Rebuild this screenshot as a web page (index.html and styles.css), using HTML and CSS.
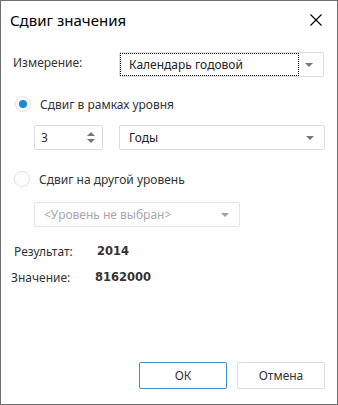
FILE: index.html
```html
<!DOCTYPE html>
<html>
<head>
	<title>Сдвиг значения</title>
	<link rel="stylesheet" href="styles.css">
</head>
<body>
	<div class="dialog">
		<div class="titlebar">
			<span class="title">Сдвиг значения</span>
			<svg class="close" width="12" height="12" viewBox="0 0 12 12"><path d="M0.5 0.5L11.5 11.5M11.5 0.5L0.5 11.5" stroke="#000" stroke-width="1.1"/></svg>
		</div>
		<div class="content">
			<div class="row dimrow">
				<span class="lbl">Измерение:</span>
				<div class="combo dimcombo">
					<span class="focus">Календарь годовой</span>
					<span class="arrow"></span>
				</div>
			</div>
			<div class="radio-row first">
				<span class="radio checked"></span>
				<span>Сдвиг в рамках уровня</span>
			</div>
			<div class="row subrow">
				<div class="spin">
					<span>3</span>
					<span class="spinbtns"><span class="up"></span><span class="down"></span></span>
				</div>
				<div class="combo levcombo">
					<span class="val">Годы</span>
					<span class="arrow"></span>
				</div>
			</div>
			<div class="radio-row second">
				<span class="radio"></span>
				<span>Сдвиг на другой уровень</span>
			</div>
			<div class="row subrow2">
				<div class="combo disabled">
					<span class="val">&lt;Уровень не выбран&gt;</span>
					<span class="arrow"></span>
				</div>
			</div>
			<div class="result r1">
				<span class="rlbl">Результат:</span>
				<b class="rval">2014</b>
			</div>
			<div class="result r2">
				<span class="rlbl2">Значение:</span>
				<b class="rval">8162000</b>
			</div>
		</div>
		<div class="footer">
			<button class="btn ok">ОК</button>
			<button class="btn">Отмена</button>
		</div>
	</div>
</body>
</html>
```
FILE: styles.css
```css
html, body {
	margin: 0;
	padding: 0;
	background: #fff;
}
body {
	font-family: "Noto Sans", sans-serif;
	font-size: 12px;
	color: #333;
}
.dialog {
	box-sizing: border-box;
	width: 338px;
	height: 405px;
	border: 1px solid #6f6f6f;
	display: flex;
	flex-direction: column;
}
.titlebar {
	height: 38px;
	display: flex;
	align-items: center;
	justify-content: space-between;
	padding: 0 15px 0 9px;
}
.title {
	font-size: 15px;
	color: #000;
	margin-top: -1px;
}
.close {
	margin-top: -1px;
}
.content {
	flex: 1;
	padding: 0 12px 0 12px;
}
.row {
	display: flex;
	align-items: center;
}
.dimrow {
	margin-top: 13px;
	height: 25px;
}
.lbl {
	width: 106px;
	color: #333;
	margin-top: -4px;
}
.combo {
	box-sizing: border-box;
	height: 25px;
	border: 1px solid #dcdcdc;
	border-radius: 2px;
	display: flex;
	align-items: center;
	position: relative;
	background: #fff;
}
.dimcombo {
	width: 205px;
}
.focus {
	box-sizing: border-box;
	border: 1px dotted #000;
	height: 23px;
	width: 179px;
	line-height: 21px;
	padding-left: 8px;
	color: #222;
}
.arrow {
	position: absolute;
	right: 10px;
	top: 10px;
	width: 0;
	height: 0;
	border-left: 4px solid transparent;
	border-right: 4px solid transparent;
	border-top: 4px solid #777;
}
.radio-row {
	display: flex;
	align-items: center;
	height: 16px;
}
.radio-row.first {
	margin-top: 19px;
	padding-left: 2px;
}
.radio-row.second {
	margin-top: 21px;
	padding-left: 1px;
}
.radio {
	box-sizing: border-box;
	width: 16px;
	height: 16px;
	border-radius: 50%;
	border: 1px solid #e2e2e2;
	margin-right: 9px;
	display: flex;
	align-items: center;
	justify-content: center;
}
.radio.checked::after {
	content: "";
	width: 8px;
	height: 8px;
	border-radius: 50%;
	background: #1b88d8;
}
.subrow {
	margin-top: 13px;
	padding-left: 21px;
}
.spin {
	box-sizing: border-box;
	width: 69px;
	height: 25px;
	border: 1px solid #dcdcdc;
	border-radius: 2px;
	display: flex;
	align-items: center;
	justify-content: space-between;
	padding: 0 7px 0 6px;
	margin-right: 16px;
}
.spinbtns {
	display: flex;
	flex-direction: column;
	gap: 3px;
}
.up, .down {
	width: 0;
	height: 0;
	border-left: 4px solid transparent;
	border-right: 4px solid transparent;
}
.up {
	border-bottom: 4px solid #777;
}
.down {
	border-top: 4px solid #777;
}
.levcombo {
	width: 206px;
}
.val {
	padding-left: 9px;
	color: #222;
}
.subrow2 {
	margin-top: 15px;
	padding-left: 21px;
}
.combo.disabled {
	width: 206px;
	border-color: #e4e4e4;
}
.combo.disabled .val {
	color: #a8a8a8;
}
.combo.disabled .arrow {
	border-top-color: #a0a0a0;
}
.result {
	display: flex;
	align-items: center;
	height: 16px;
}
.r1 {
	margin-top: 16px;
}
.r2 {
	margin-top: 10px;
}
.rlbl {
	width: 83px;
	padding-left: 1px;
}
.rlbl2 {
	width: 84px;
	margin-left: -2px;
}
.rval {
	font-family: "DejaVu Sans", sans-serif;
	font-size: 11.5px;
	color: #333;
}
.footer {
	display: flex;
	justify-content: flex-end;
	gap: 10px;
	padding: 0 12px 15px 0;
}
.btn {
	box-sizing: border-box;
	width: 88px;
	height: 27px;
	border: 1px solid #dcdcdc;
	border-radius: 2px;
	background: #fff;
	font-family: "Noto Sans", sans-serif;
	font-size: 12px;
	color: #333;
	padding: 0;
}
.btn.ok {
	border-color: #3a8fd0;
}
```
